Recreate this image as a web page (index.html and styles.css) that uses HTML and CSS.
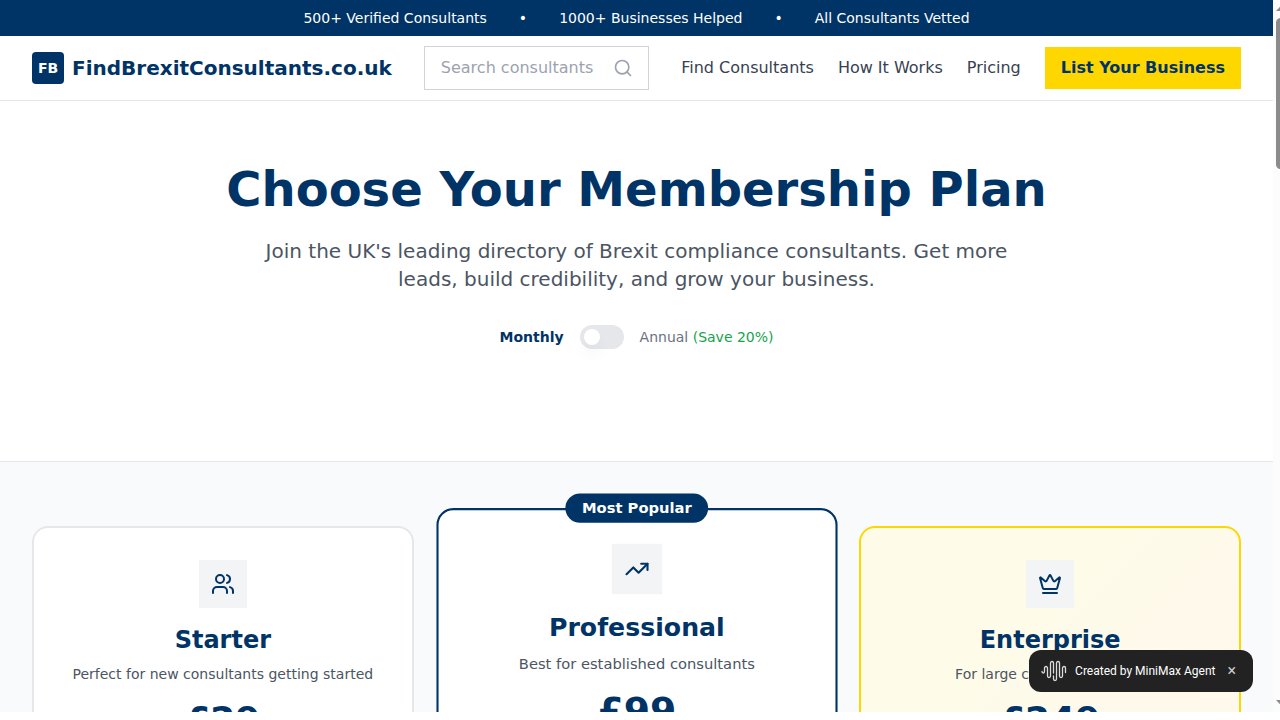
FILE: index.html
```html
<!DOCTYPE html>
<html lang="en">
<head>
<meta charset="utf-8">
<title>Membership Plans - FindBrexitConsultants.co.uk</title>
<link rel="stylesheet" href="styles.css">
</head>
<body>
<div class="viewport">
  <div class="page">
    <div class="topbar">
      <span>500+ Verified Consultants</span><span>•</span><span>1000+ Businesses Helped</span><span>•</span><span>All Consultants Vetted</span>
    </div>
    <header class="header">
      <a class="brand" href="#"><span class="brand-mark">FB</span><span>FindBrexitConsultants.co.uk</span></a>
      <form class="search" role="search">
        <input class="search-input" type="text" aria-label="Search consultants" placeholder="Search consultants by name">
        <button class="search-button" type="button" aria-label="Search">
          <svg class="icon-search" viewBox="0 0 24 24"><circle cx="11" cy="11" r="8"/><path d="m21 21-4.3-4.3"/></svg>
        </button>
      </form>
      <nav class="nav">
        <a href="#">Find Consultants</a>
        <a href="#">How It Works</a>
        <a href="#">Pricing</a>
        <a class="cta" href="#">List Your Business</a>
      </nav>
    </header>
    <main>
      <section class="hero">
        <h1>Choose Your Membership Plan</h1>
        <p class="lead">Join the UK's leading directory of Brexit compliance consultants. Get more leads, build credibility, and grow your business.</p>
        <div class="billing">
          <span class="billing-active">Monthly</span>
          <input class="switch" type="checkbox" role="switch" aria-label="Annual billing">
          <span class="billing-annual">Annual <span class="saving">(Save 20%)</span></span>
        </div>
      </section>
      <section class="plans">
        <article class="plan">
          <div class="plan-icon"><svg viewBox="0 0 24 24"><path d="M16 21v-2a4 4 0 0 0-4-4H6a4 4 0 0 0-4 4v2"/><circle cx="9" cy="7" r="4"/><path d="M22 21v-2a4 4 0 0 0-3-3.87"/><path d="M16 3.13a4 4 0 0 1 0 7.75"/></svg></div>
          <h2>Starter</h2>
          <p>Perfect for new consultants getting started</p>
          <div class="price">£29</div>
        </article>
        <article class="plan plan-featured">
          <div class="badge">Most Popular</div>
          <div class="plan-icon"><svg viewBox="0 0 24 24"><path d="M22 7 13.5 15.5 8.5 10.5 2 17"/><path d="M16 7h6v6"/></svg></div>
          <h2>Professional</h2>
          <p>Best for established consultants</p>
          <div class="price">£99</div>
        </article>
        <article class="plan plan-gold">
          <div class="plan-icon"><svg viewBox="0 0 24 24"><path d="M11.562 3.266a.5.5 0 0 1 .876 0L15.39 8.87a1 1 0 0 0 1.516.294L21.183 5.5a.5.5 0 0 1 .798.519l-2.834 10.246a1 1 0 0 1-.956.734H5.81a1 1 0 0 1-.957-.734L2.02 6.02a.5.5 0 0 1 .798-.519l4.276 3.664a1 1 0 0 0 1.516-.294z"/><path d="M5 21h14"/></svg></div>
          <h2>Enterprise</h2>
          <p>For large consultancy firms</p>
          <div class="price">£249</div>
        </article>
      </section>
    </main>
  </div>
  <div class="scrollbar" aria-hidden="true"><div class="arrow arrow-up"></div><div class="thumb"></div><div class="arrow arrow-down"></div></div>
  <div class="credit">
    <svg class="wave" viewBox="0 0 26 22"><path d="M1 11.500c0 2 2.500 2 2.500 0V8c0-2 3-2 3 0v8c0 2 3 2 3 0V3c0-2 3-2 3 0v10M12.500 16v3c0 2 3 2 3 0V3c0-2 3-2 3 0v13c0 2 3 2 3 0V8c0-2 3-2 3 0v4.500"/></svg>
    <span>Created by MiniMax Agent</span>
    <button class="close" type="button" aria-label="Close">×</button>
  </div>
</div>
</body>
</html>
```
FILE: styles.css
```css
* { box-sizing: border-box; }
body { margin: 0; background: #fff; color: #374151; font-family: "DejaVu Sans", sans-serif; font-size: 16px; line-height: 24px; overflow: hidden; }
h1, h2, p { margin: 0; }
a { color: inherit; text-decoration: none; }
button { border: 0; padding: 0; background: none; color: inherit; font: inherit; cursor: pointer; }
svg { display: block; fill: none; stroke: currentColor; stroke-width: 2; stroke-linecap: round; stroke-linejoin: round; }

.viewport { position: relative; display: flex; height: calc(100vh - 8px); overflow: hidden; }
.page { flex: 1; min-width: 0; }

.topbar { display: flex; justify-content: center; gap: 32px; padding: 8px 16px; background: #036; color: #fff; font-size: 14px; line-height: 20px; }
.header { display: flex; align-items: center; gap: 32px; height: 65px; padding: 0 32px; border-bottom: 1px solid #e5e7eb; }
.brand { display: flex; align-items: center; gap: 8px; color: #036; font-size: 20px; font-weight: 700; line-height: 28px; }
.brand-mark { display: flex; align-items: center; justify-content: center; width: 32px; height: 32px; border-radius: 4px; background: #036; color: #fff; font-size: 14px; line-height: 20px; }
.search { display: flex; align-items: center; flex: 1; min-width: 0; height: 44px; padding: 0 15px 0 16px; gap: 16px; border: 1px solid #d1d5db; }
.search-input { flex: 1; min-width: 0; padding: 0; border: 0; outline: 0; background: none; color: #374151; font: inherit; }
.search-input::placeholder { color: #9ca3af; }
.search-button { color: #9ca3af; }
.icon-search { width: 20px; height: 20px; }
.nav { display: flex; align-items: center; gap: 24px; white-space: nowrap; }
.cta { padding: 9px 16px; background: #ffd700; color: #036; font-weight: 700; }

.hero { display: flex; flex-direction: column; align-items: center; padding: 64px 32px 112px; border-bottom: 1px solid #e5e7eb; text-align: center; }
.hero h1 { margin-bottom: 24px; color: #036; font-size: 48px; line-height: 48px; }
.lead { max-width: 768px; margin-bottom: 32px; color: #4b5563; font-size: 20px; line-height: 28px; }
.billing { display: flex; align-items: center; gap: 16px; font-size: 14px; line-height: 24px; }
.billing-active { color: #036; font-weight: 700; }
.billing-annual { color: #6b7280; }
.saving { color: #16a34a; }
.switch { display: flex; align-items: center; appearance: none; width: 44px; height: 24px; margin: 0; padding: 0 4px; border-radius: 12px; background: #e5e7eb; }
.switch::before { content: ""; width: 16px; height: 16px; border-radius: 50%; background: #fff; box-shadow: 0 10px 15px -3px rgba(0, 0, 0, .1); }

.plans { display: grid; grid-template-columns: repeat(3, 1fr); gap: 32px; padding: 64px 32px; background: #f9fafb; }
.plan { position: relative; display: flex; flex-direction: column; align-items: center; min-height: 716px; padding: 32px; border: 2px solid #e5e7eb; border-radius: 16px; background: #fff; text-align: center; }
.plan-featured { border-color: #036; transform: scale(1.05); }
.plan-gold { border-color: #ffd700; background: linear-gradient(135deg, #fefce8 15%, #fff7ed 60%); }
.plan-icon { display: flex; align-items: center; justify-content: center; width: 48px; height: 48px; margin-bottom: 16px; background: #f3f4f6; color: #036; }
.plan-icon svg { width: 24px; height: 24px; }
.plan h2 { margin-bottom: 8px; color: #036; font-size: 24px; line-height: 32px; }
.plan p { margin-bottom: 16px; color: #4b5563; font-size: 14px; line-height: 20px; }
.price { color: #036; font-size: 36px; font-weight: 700; line-height: 40px; }
.badge { position: absolute; top: -16px; left: 50%; transform: translateX(-50%); padding: 4px 16px; border-radius: 14px; background: #036; color: #fff; font-size: 14px; font-weight: 700; line-height: 20px; white-space: nowrap; }

.scrollbar { display: flex; flex-direction: column; flex: none; width: 7px; overflow: hidden; background: #fcfcfc; }
.arrow { flex: none; width: 8px; height: 5px; margin-left: 3px; background: #8b8b8b; }
.arrow-up { margin-top: 6px; clip-path: polygon(0 100%, 60% 0, 100% 0, 100% 100%); }
.arrow-down { margin-top: auto; margin-bottom: 7px; clip-path: polygon(0 0, 100% 0, 100% 100%, 60% 100%); }
.thumb { flex: none; width: 9px; height: 151px; margin: 7px 0 0 3px; border-radius: 5px; background: #8b8b8b; }

.credit { position: absolute; right: 27px; bottom: 20px; display: flex; align-items: center; height: 42px; padding: 0 17px 0 12px; border-radius: 12px; background: #222; color: #fff; font-family: Roboto, sans-serif; font-size: 12px; line-height: 20px; }
.wave { width: 26px; height: 22px; margin-right: 8px; color: #ddd; stroke-width: 1.3; }
.close { margin-left: 12px; color: #ccc; font-size: 16px; }
```
